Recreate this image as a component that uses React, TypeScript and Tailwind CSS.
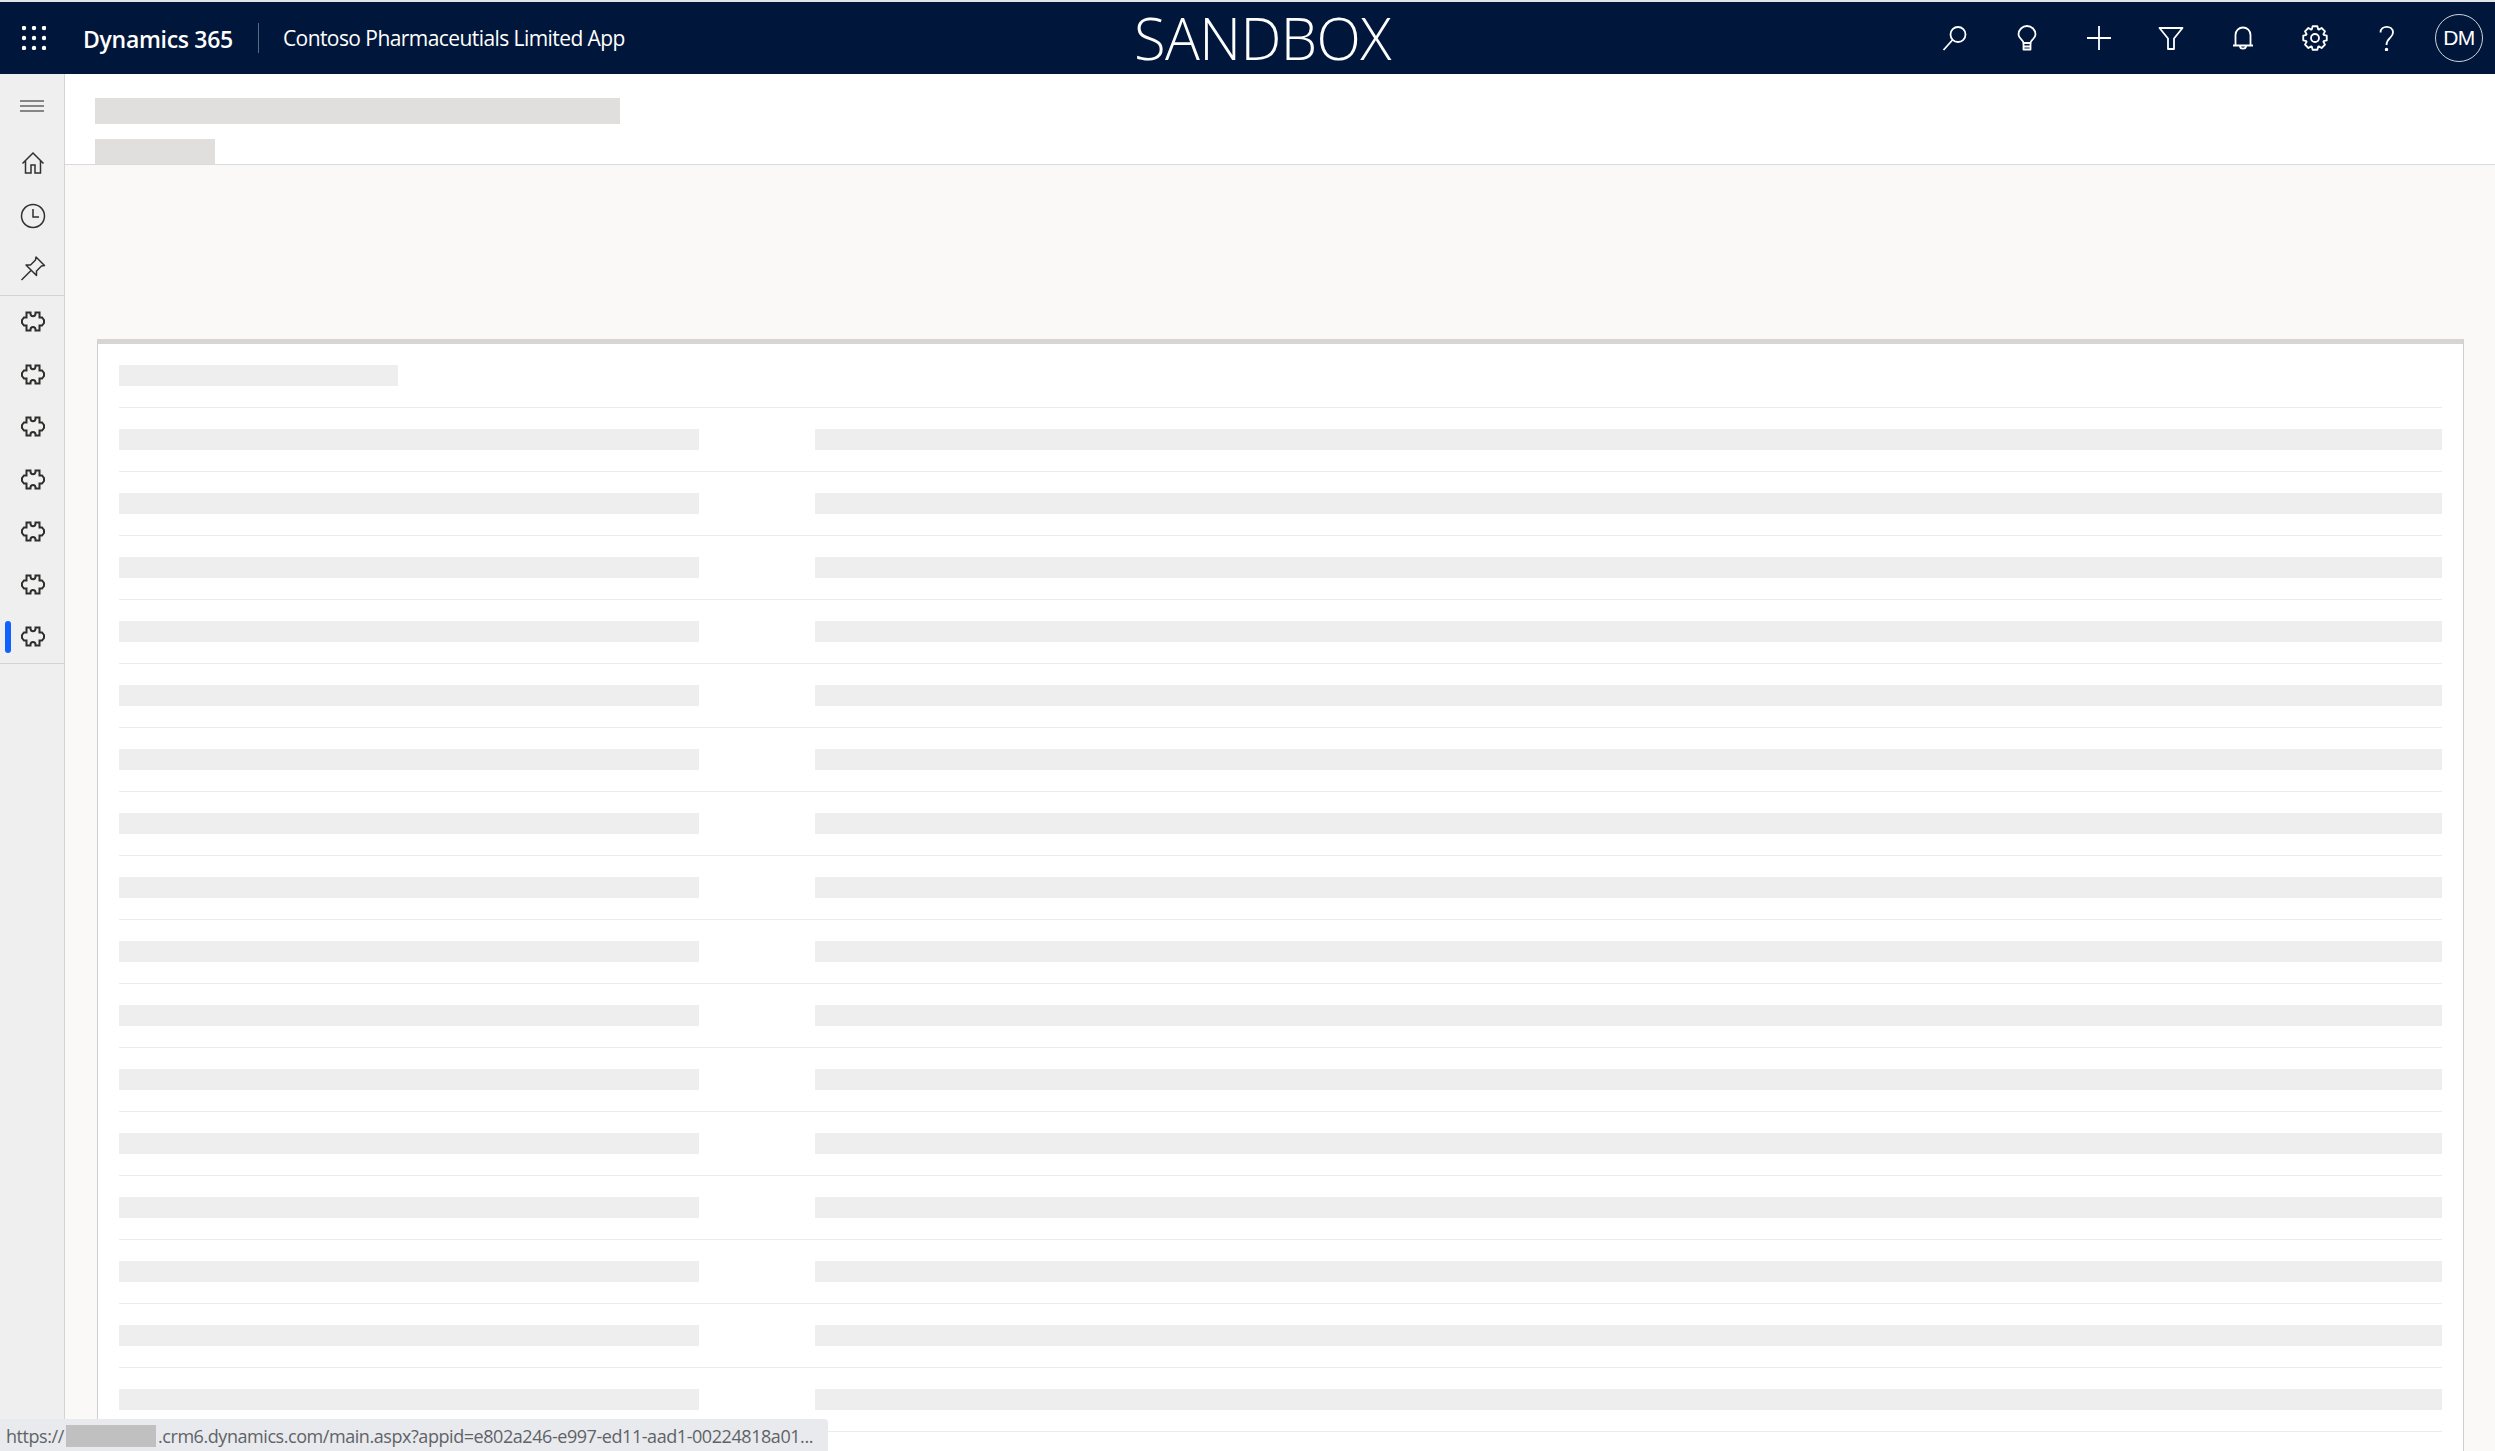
const rowKeys = Array.from({ length: 16 }, (_, i) => i);
const puzzleKeys = [0, 1, 2, 3, 4, 5, 6];

const font = { fontFamily: "'Open Sans', 'Noto Sans', sans-serif" };

// gear outline, 8 teeth round the middle of a 26 box
function gearPath() {
  const pts: string[] = [];
  for (let i = 0; i < 8; i++) {
    const a = (i * 45 * Math.PI) / 180;
    [
      [-0.36, 9.2],
      [-0.2, 12],
      [0.2, 12],
      [0.36, 9.2],
    ].forEach(([da, r]) => {
      pts.push(`${(13 + r * Math.sin(a + da)).toFixed(2)} ${(13 - r * Math.cos(a + da)).toFixed(2)}`);
    });
  }
  return `M${pts.join("L")}Z`;
}

function Puzzle() {
  return (
    <svg width="24" height="21" viewBox="0 0 24 21" fill="none" stroke="#2f2e2d" strokeWidth="2" strokeLinejoin="miter">
      <path d="M5.500 1.500H9.500V2.500C9.500 6 14.500 6 14.500 2.500V1.500H18.500V6.500H21L23 9V12L21 14.500H18.500V19.500H14.500V18.500C14.500 15 9.500 15 9.500 18.500V19.500H5.500V14.500H3L1 12V9L3 6.500H5.500Z" />
    </svg>
  );
}

function TopIcon({ children }: { children: React.ReactNode }) {
  return (
    <div className="w-[72px] h-full flex items-center justify-center">
      <svg width="26" height="26" viewBox="0 0 26 26" fill="none" stroke="white" strokeWidth="1.800" strokeLinejoin="round">
        {children}
      </svg>
    </div>
  );
}

export default function App() {
  return (
    <div className="w-[2495px] h-[1451px] relative bg-white" style={font}>
      <div className="h-[2px] bg-[#e1e3e6]" />
      <header className="h-[72px] bg-[#00163a] flex items-center text-white relative">
        <div className="w-[64px] flex justify-center pl-[4px]">
          <svg width="24" height="24" viewBox="0 0 24 24" fill="white">
            {[2, 12, 22].map((y) =>
              [2, 12, 22].map((x) => <circle key={`${x}-${y}`} cx={x} cy={y} r="2.200" />)
            )}
          </svg>
        </div>
        <span className="ml-[19px] pt-[2px] text-[23px] font-semibold tracking-[-0.3px]">Dynamics 365</span>
        <div className="ml-[25px] w-px h-[30px] bg-[#5a6a84]" />
        <span className="ml-[24px] pt-[2px] text-[21px] tracking-[-0.57px]">Contoso Pharmaceutials Limited App</span>
        <div className="absolute left-[1134px] top-0 text-[58px] leading-[72px] font-light tracking-[-0.6px]">SANDBOX</div>
        <div className="ml-auto flex h-full items-center">
          <TopIcon>
            <circle cx="16" cy="9.500" r="7.500" />
            <path d="M10.500 15 1.500 25" />
          </TopIcon>
          <TopIcon>
            <path d="M9.500 18C9.500 15 4.500 13.500 4.500 9.500a8.500 8.500 0 0 1 17 0C21.500 13.500 16.500 15 16.500 18Z" />
            <path d="M9.500 18V24.500H16.500V18M9.500 21.500H16.500" />
          </TopIcon>
          <TopIcon>
            <path d="M13 1v24M1 13h24" />
          </TopIcon>
          <TopIcon>
            <path d="M1.500 3H24.500L16 13.500V24H10V13.500Z" />
          </TopIcon>
          <TopIcon>
            <path d="M5.500 20V10a7.500 7.500 0 0 1 15 0V20M3 20.500H23M10 21c0 3.500 6 3.500 6 0" />
          </TopIcon>
          <TopIcon>
            <circle cx="13" cy="13" r="4" />
            <path d={gearPath()} />
          </TopIcon>
          <TopIcon>
            <path d="M6.500 7.500C6.500 0 19 0 19 7.500 19 13 12.500 13 12.500 20" />
            <circle cx="12.500" cy="24.500" r=".8" fill="white" />
          </TopIcon>
          <div className="w-[72px] h-full flex items-center justify-center">
            <div className="w-[48px] h-[48px] rounded-full border border-[#d0d4da] flex items-center justify-center text-[21px] tracking-[-0.5px] font-['Liberation_Sans',sans-serif]">DM</div>
          </div>
        </div>
      </header>

      <div className="flex h-[1377px] overflow-hidden">
        <aside className="w-[65px] shrink-0 bg-[#efefef] border-r border-[#d4d4d4] flex flex-col">
          <div className="h-[63px] flex items-center justify-center">
            <svg width="24" height="12" viewBox="0 0 24 12" stroke="#1f1f1f" strokeWidth="1.100">
              <path d="M0 1h24M0 6h24M0 11h24" />
            </svg>
          </div>
          <div className="h-[52.5px] flex items-center justify-center pl-[2px]">
            <svg width="24" height="24" viewBox="0 0 24 24" fill="none" stroke="#323130" strokeWidth="1.500">
              <path d="M1.500 12.500 12 2l10.500 10.500M4.500 10v12h5.500v-8h4v8h5.500V10" />
            </svg>
          </div>
          <div className="h-[52.5px] flex items-center justify-center pl-[2px]">
            <svg width="26" height="26" viewBox="0 0 26 26" fill="none" stroke="#323130" strokeWidth="1.500">
              <circle cx="13" cy="13" r="11.500" />
              <path d="M13 6v8h6" />
            </svg>
          </div>
          <div className="h-[52.5px] flex items-center justify-center pl-[2px]">
            <svg width="26" height="26" viewBox="0 0 26 26" fill="none" stroke="#323130" strokeWidth="1.500" strokeLinejoin="round">
              <path d="M16 2 24.500 10.500 21.500 11 16.500 16 16.500 20.500 6 10 10.500 10 15.500 5ZM11 15.500 1.500 25" />
            </svg>
          </div>
          <div className="h-[1px] bg-[#d4d4d4]" />
          {puzzleKeys.map((k) => (
            <div key={k} className="h-[52.5px] flex items-center justify-center relative pl-[2px]">
              {k === 6 && <div className="absolute left-[5px] top-[10px] w-[6px] h-[32px] rounded-full bg-[#0f62fe]" />}
              <Puzzle />
            </div>
          ))}
          <div className="h-[1px] bg-[#d4d4d4]" />
        </aside>

        <main className="flex-1 bg-[#faf9f8] flex flex-col">
          <div className="h-[91px] bg-white border-b border-[#d9d9d9] pl-[30px] pt-[24px] shrink-0">
            <div className="w-[525px] h-[26px] bg-[#e1dfdd]" />
            <div className="w-[120px] h-[25px] mt-[15px] bg-[#e1dfdd]" />
          </div>
          <div className="pl-[32px] pr-[31px] pt-[174px]">
            <section className="bg-white border-x border-[#cfcfcf] border-t-[5px] border-t-[#d6d5d3] h-[1200px] pl-[21px] pr-[21px]">
              <div className="h-[64px] border-b border-[#ececec] pt-[21px]">
                <div className="w-[279px] h-[21px] bg-[#eeeeee]" />
              </div>
              {rowKeys.map((i) => (
                <div key={i} className="h-[64px] border-b border-[#ececec] flex pt-[21px]">
                  <div className="w-[580px] h-[21px] bg-[#eeeeee]" />
                  <div className="ml-[116px] flex-1 h-[21px] bg-[#eeeeee]" />
                </div>
              ))}
            </section>
          </div>
        </main>
      </div>

      <div className="absolute left-0 bottom-0 w-[828px] h-[32px] bg-[#e8eaed] rounded-tr-[4px] flex items-center pl-[6px] pt-[2px] text-[18px] text-[#5f6368] tracking-[-0.44px] whitespace-nowrap">
        <span className="w-[60px]">https://</span>
        <span className="w-[90px] h-[22px] bg-[#c0c0c0] mr-[2px]" />
        <span>.crm6.dynamics.com/main.aspx?appid=e802a246-e997-ed11-aad1-00224818a01...</span>
      </div>
    </div>
  );
}
